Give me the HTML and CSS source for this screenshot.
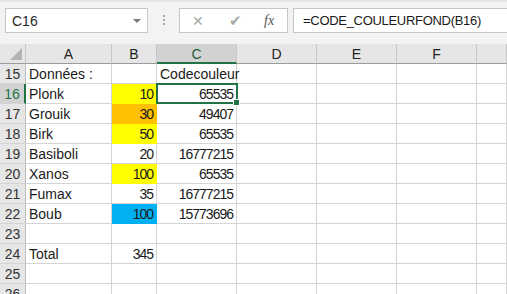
FILE: index.html
```html
<!DOCTYPE html>
<html lang="fr">
<head>
  <meta charset="UTF-8" />
  <title>Classeur</title>
  <link rel="stylesheet" href="styles.css">
</head>
<body>

<!-- Formula bar -->
<div class="topbar">
  <div class="namebox">
    <span>C16</span>
    <span class="drop"></span>
  </div>
  <div class="grip"><i></i><i></i><i></i></div>
  <div class="actions">
    <span class="act">&#x2715;</span>
    <span class="act check">&#x2714;</span>
    <span class="fx">fx</span>
  </div>
  <div class="formula">=CODE_COULEURFOND(B16)</div>
</div>

<!-- Sheet -->
<div class="sheet">
  <div class="row head">
    <div class="corner"></div>
    <div class="col">A</div>
    <div class="col">B</div>
    <div class="col sel">C</div>
    <div class="col">D</div>
    <div class="col">E</div>
    <div class="col">F</div>
    <div class="col"></div>
  </div>

  <div class="row">
    <div class="num">15</div>
    <div class="cell">Données :</div>
    <div class="cell"></div>
    <div class="cell">Codecouleur</div>
    <div class="cell"></div><div class="cell"></div><div class="cell"></div><div class="cell"></div>
  </div>
  <div class="row">
    <div class="num sel">16</div>
    <div class="cell">Plonk</div>
    <div class="cell n yellow">10</div>
    <div class="cell n active">65535</div>
    <div class="cell"></div><div class="cell"></div><div class="cell"></div><div class="cell"></div>
  </div>
  <div class="row">
    <div class="num">17</div>
    <div class="cell">Grouik</div>
    <div class="cell n orange">30</div>
    <div class="cell n">49407</div>
    <div class="cell"></div><div class="cell"></div><div class="cell"></div><div class="cell"></div>
  </div>
  <div class="row">
    <div class="num">18</div>
    <div class="cell">Birk</div>
    <div class="cell n yellow">50</div>
    <div class="cell n">65535</div>
    <div class="cell"></div><div class="cell"></div><div class="cell"></div><div class="cell"></div>
  </div>
  <div class="row">
    <div class="num">19</div>
    <div class="cell">Basiboli</div>
    <div class="cell n">20</div>
    <div class="cell n">16777215</div>
    <div class="cell"></div><div class="cell"></div><div class="cell"></div><div class="cell"></div>
  </div>
  <div class="row">
    <div class="num">20</div>
    <div class="cell">Xanos</div>
    <div class="cell n yellow">100</div>
    <div class="cell n">65535</div>
    <div class="cell"></div><div class="cell"></div><div class="cell"></div><div class="cell"></div>
  </div>
  <div class="row">
    <div class="num">21</div>
    <div class="cell">Fumax</div>
    <div class="cell n">35</div>
    <div class="cell n">16777215</div>
    <div class="cell"></div><div class="cell"></div><div class="cell"></div><div class="cell"></div>
  </div>
  <div class="row">
    <div class="num">22</div>
    <div class="cell">Boub</div>
    <div class="cell n blue">100</div>
    <div class="cell n">15773696</div>
    <div class="cell"></div><div class="cell"></div><div class="cell"></div><div class="cell"></div>
  </div>
  <div class="row">
    <div class="num">23</div>
    <div class="cell"></div><div class="cell"></div><div class="cell"></div>
    <div class="cell"></div><div class="cell"></div><div class="cell"></div><div class="cell"></div>
  </div>
  <div class="row">
    <div class="num">24</div>
    <div class="cell">Total</div>
    <div class="cell n">345</div>
    <div class="cell"></div>
    <div class="cell"></div><div class="cell"></div><div class="cell"></div><div class="cell"></div>
  </div>
  <div class="row">
    <div class="num">25</div>
    <div class="cell"></div><div class="cell"></div><div class="cell"></div>
    <div class="cell"></div><div class="cell"></div><div class="cell"></div><div class="cell"></div>
  </div>
  <div class="row">
    <div class="num">26</div>
    <div class="cell"></div><div class="cell"></div><div class="cell"></div>
    <div class="cell"></div><div class="cell"></div><div class="cell"></div><div class="cell"></div>
  </div>
</div>

</body>
</html>
```

FILE: styles.css
```css
/* Base */
body {
  margin: 0;
  font-family: 'Liberation Sans', Arial, sans-serif;
  background: #fff;
  color: #1a1a1a;
  overflow: hidden;
}

/* Formula bar */
.topbar {
  height: 44px;
  box-sizing: border-box;
  border-top: 2px solid #e3e3e3;
  padding: 6px 0 0 5px;
  background: #f3f3f3;
  display: flex;
  align-items: flex-start;
}

.namebox {
  width: 143px;
  height: 25px;
  box-sizing: border-box;
  border: 1px solid #c6c6c6;
  background: #fff;
  display: flex;
  align-items: center;
  justify-content: space-between;
  padding: 0 6px 0 6px;
  font-size: 14px;
  color: #262626;
}

.drop {
  width: 0;
  height: 0;
  border-left: 4px solid transparent;
  border-right: 4px solid transparent;
  border-top: 4px solid #7a7a7a;
}

.grip {
  width: 31px;
  display: flex;
  flex-direction: column;
  align-items: center;
  gap: 2px;
  padding-top: 7px;
}

.grip i {
  width: 2px;
  height: 2px;
  background: #a8a8a8;
}

.actions {
  width: 109px;
  height: 25px;
  box-sizing: border-box;
  border: 1px solid #c6c6c6;
  background: #fff;
  display: flex;
  align-items: center;
  padding-left: 12px;
}

.act {
  width: 37px;
  font-size: 14px;
  color: #a6a6a6;
}

.check {
  font-size: 15px;
}

.fx {
  font-family: 'Liberation Serif', serif;
  font-style: italic;
  font-size: 14px;
  color: #555;
  margin-left: -2px;
}

.formula {
  flex: 1;
  height: 25px;
  box-sizing: border-box;
  margin-left: 5px;
  border: 1px solid #c6c6c6;
  border-right: none;
  background: #fff;
  padding-left: 9px;
  line-height: 23px;
  font-size: 13px;
  letter-spacing: -0.3px;
  color: #1a1a1a;
}

/* Sheet grid */
.row {
  display: grid;
  grid-template-columns: 26px 86px 45px 80px 80px 80px 80px 1fr;
  height: 20px;
}

.row > div {
  box-sizing: border-box;
  height: 20px;
  border-right: 1px solid #d4d4d4;
  border-bottom: 1px solid #d4d4d4;
  font-size: 14px;
  line-height: 21px;
  white-space: nowrap;
}

.head > div {
  background: #e6e6e6;
  border-right-color: #c6c6c6;
  border-bottom-color: #9b9b9b;
  text-align: center;
  color: #222;
}

.corner {
  position: relative;
}

.corner::after {
  content: "";
  position: absolute;
  right: 3px;
  bottom: 3px;
  border-left: 12px solid transparent;
  border-bottom: 12px solid #b4b4b4;
}

.head .sel {
  background: #d2d2d2;
  border-bottom: 2px solid #217346;
  color: #1f5c3b;
}

.num {
  background: #e6e6e6;
  text-align: center;
  color: #333;
  border-right-color: #bdbdbd !important;
}

.num.sel {
  background: #d2d2d2;
  color: #217346;
  border-right: 2px solid #217346 !important;
}

.cell {
  padding: 0 3px 0 3px;
  overflow: visible;
}

.n {
  text-align: right;
  letter-spacing: -1px;
}

.yellow { background: #ffff00; border-color: #ffff00 !important; }
.orange { background: #ffc000; border-color: #ffc000 !important; }
.blue   { background: #00b0f0; border-color: #00b0f0 !important; }

/* Active cell */
.active {
  position: relative;
}

.active::before {
  content: "";
  position: absolute;
  left: -1px;
  top: -1px;
  right: -2px;
  bottom: -1px;
  border: 2px solid #217346;
}

.active::after {
  content: "";
  position: absolute;
  right: -4px;
  bottom: -3px;
  width: 5px;
  height: 5px;
  background: #217346;
  border: 1px solid #fff;
}
```
